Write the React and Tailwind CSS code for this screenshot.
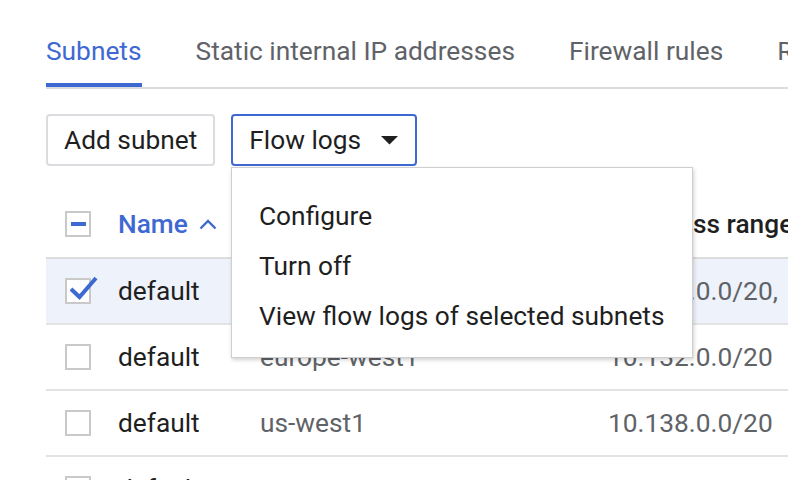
import { useState } from "react";

const BLUE = "text-[#3f69d2]";

const tabs = ["Subnets", "Static internal IP addresses", "Firewall rules", "Routes"];

const rows = [
  { name: "default", region: "us-central1", range: "10.128.0.0/20,", checked: true },
  { name: "default", region: "europe-west1", range: "10.132.0.0/20" },
  { name: "default", region: "us-west1", range: "10.138.0.0/20" },
  { name: "default", region: "us-east1", range: "10.142.0.0/20" },
];

// ─── Checkbox ────────────────────────────────────────────────────────────────
function Box({ state }) {
  return (
    <div className="relative w-[26px] h-[26px] border-2 border-[#c9c9c9] bg-white flex items-center justify-center shrink-0">
      {state === "some" && <div className="w-[15px] h-[4px] bg-[#3f69d2]" />}
      {state === "on" && (
        <svg className="absolute left-[1px] top-[-4px]" width="30" height="24" viewBox="0 0 30 24">
          <path d="M3 13 L11.5 21 L28 2" fill="none" stroke="#3f69d2" strokeWidth="4" />
        </svg>
      )}
    </div>
  );
}

// ─── Flow logs menu ──────────────────────────────────────────────────────────
function FlowMenu() {
  return (
    <div className="absolute left-[231px] top-[167px] w-[462px] h-[191px] bg-white border border-[#cfcfcf] shadow-[1px_2px_4px_rgba(0,0,0,0.18)] pt-[23px] pl-[27px]">
      {["Configure", "Turn off", "View flow logs of selected subnets"].map((item) => (
        <div key={item} className="h-[50px] flex items-center text-[26.3px] leading-[32px] text-[#1f1f1f]">
          {item}
        </div>
      ))}
    </div>
  );
}

export default function App() {
  const [active] = useState(0);

  return (
    <div className="relative w-[788px] h-[480px] overflow-hidden bg-white font-['Roboto',sans-serif] whitespace-nowrap">
      <div className="pl-[46px]">
        {/* tabs */}
        <div className="flex gap-[54px] border-b-2 border-[#dadce0] pt-[35px]">
          {tabs.map((t, i) => (
            <div
              key={t}
              className={
                "shrink-0 text-[26.3px] leading-[32px] pb-[16px] border-b-4 " +
                (i === active ? "text-[#3f69d2] border-[#3f69d2]" : "text-[#5f6368] border-transparent")
              }
            >
              {t}
            </div>
          ))}
        </div>

        {/* actions */}
        <div className="flex gap-[16px] mt-[25px]">
          <button className="h-[52px] px-[16px] border-2 border-[#dadce0] rounded-[4px] bg-white text-[26.3px] leading-[32px] text-[#1f1f1f]">
            Add subnet
          </button>
          <button className="h-[52px] pl-[16px] pr-[17px] border-2 border-[#3f69d2] rounded-[4px] bg-white text-[26.3px] leading-[32px] text-[#1f1f1f] flex items-center gap-[20px]">
            Flow logs
            <svg width="17" height="9" viewBox="0 0 17 9">
              <path d="M0 0 H17 L8.5 8.5 Z" fill="#1f1f1f" />
            </svg>
          </button>
        </div>

        {/* table */}
        <div className="mt-[25px]">
          <div className="h-[68px] flex items-center border-b-2 border-[#dcdcdc] pl-[19px] text-[26.3px] leading-[32px] font-medium">
            <Box state="some" />
            <div className={"ml-[27px] w-[142px] shrink-0 flex items-center gap-[11px] " + BLUE}>
              Name
              <svg width="18" height="11" viewBox="0 0 18 11">
                <path d="M1.5 9.5 L9 2 L16.5 9.5" fill="none" stroke="#3f69d2" strokeWidth="2.4" />
              </svg>
            </div>
            <div className="w-[239px] shrink-0 text-[#1f1f1f]">Region</div>
            <div className="shrink-0 text-[#1f1f1f]">Internal IP address ranges</div>
          </div>

          {rows.map((r, i) => (
            <div
              key={i}
              className={
                "h-[66px] flex items-center border-b-2 border-[#e3e3e3] pl-[19px] text-[26.3px] leading-[32px] " +
                (r.checked ? "bg-[#eef2fb]" : "bg-white")
              }
            >
              <Box state={r.checked ? "on" : "off"} />
              <div className="ml-[27px] w-[142px] shrink-0 text-[#1f1f1f]">{r.name}</div>
              <div className="w-[348px] shrink-0 text-[#5f6368]">{r.region}</div>
              <div className="shrink-0 text-[#5f6368]">{r.range}</div>
            </div>
          ))}
        </div>
      </div>

      <FlowMenu />
    </div>
  );
}
